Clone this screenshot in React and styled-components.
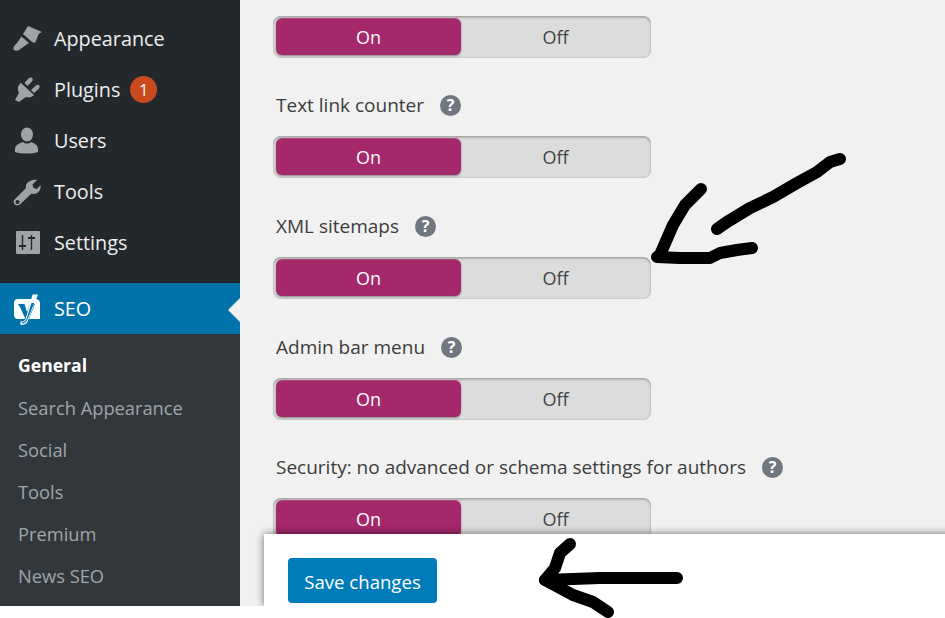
import React from "react";
import styled, { createGlobalStyle } from "styled-components";

const Global = createGlobalStyle`
  html, body { margin: 0; padding: 0; background: #fff; }
  body { font-family: "Open Sans", "Noto Sans", sans-serif; }
  * { box-sizing: border-box; }
`;

const Page = styled.div`
  position: relative;
  width: 945px;
  height: 618px;
  overflow: hidden;
  background: #fff;
`;
const Frame = styled.div`
  position: relative;
  display: flex;
  height: 606px;
  overflow: hidden;
`;
const Sidebar = styled.nav`
  width: 240px;
  flex: none;
  display: flex;
  flex-direction: column;
  background: #23282d;
  padding-top: 13px;
`;
const MenuItem = styled.div`
  height: 51px;
  display: flex;
  align-items: center;
  padding-left: 12px;
  gap: 12px;
  color: #eee;
  font-size: 19.8px;
  position: relative;
  flex: none;
`;
const ActiveItem = styled(MenuItem)`
  background: #0073aa;
  color: #fff;
  margin-top: 15px;
  &::after {
    content: "";
    position: absolute;
    right: 0;
    top: 15px;
    border: 12px solid transparent;
    border-left: 0;
    border-right-color: #f1f1f1;
  }
`;
const IconSvg = styled.svg`
  width: 30px;
  height: 30px;
  flex: none;
  fill: #9ea3a8;
`;
const Badge = styled.span`
  width: 27px;
  height: 27px;
  border-radius: 50%;
  background: #ca4a1f;
  color: #fff;
  font-size: 16px;
  display: flex;
  align-items: center;
  justify-content: center;
  margin-left: -2px;
`;
const SubMenu = styled.div`
  flex: 1;
  background: #32373c;
  padding-top: 10px;
`;
const SubItem = styled.div`
  height: 42px;
  display: flex;
  align-items: center;
  padding-left: 18px;
  font-size: ${p => (p.$active ? "17.6px" : "18.3px")};
  color: ${p => (p.$active ? "#fff" : "#a0a5aa")};
  font-weight: ${p => (p.$active ? 700 : 400)};
`;
const Main = styled.main`
  flex: 1;
  background: #f1f1f1;
  padding: 16px 0 0 33px;
  color: #444;
`;
const Setting = styled.div`
  display: flex;
  flex-direction: column;
  align-items: flex-start;
`;
const Label = styled.div`
  display: flex;
  align-items: center;
  height: 26px;
  margin: ${p => p.$top}px 0 18px 3px;
  font-size: 19px;
  font-weight: 400;
  color: #3c3c3c;
`;
const Help = styled.span`
  width: 21px;
  height: 21px;
  border-radius: 50%;
  background: #707780;
  color: #fff;
  font-size: 16px;
  font-weight: 700;
  display: flex;
  align-items: center;
  justify-content: center;
  margin-left: 16px;
`;
const Toggle = styled.div`
  width: 378px;
  height: 42px;
  flex: none;
  padding: 2px 3px 3px;
  border-radius: 8px;
  background: #dcdcdc;
  box-shadow: inset 0 2px 2px rgba(0,0,0,.18), inset 0 0 2px rgba(0,0,0,.25);
  display: grid;
  grid-template-columns: 185px 1fr;
  font-size: 18px;
`;
const OnPart = styled.div`
  background: #a4286a;
  color: #fff;
  border-radius: 6px;
  display: flex;
  align-items: center;
  justify-content: center;
  box-shadow: 0 1px 2px rgba(0,0,0,.4), inset 0 1px 1px rgba(255,255,255,.15);
`;
const OffPart = styled.div`
  color: #444;
  display: flex;
  align-items: center;
  justify-content: center;
  padding-left: 2px;
`;
const SaveBar = styled.div`
  position: absolute;
  left: 264px;
  top: 534px;
  right: -20px;
  height: 72px;
  background: #fff;
  box-shadow: 0 0 8px rgba(0,0,0,.55);
  padding: 24px;
`;
const SaveButton = styled.button`
  width: 149px;
  height: 45px;
  border: 0;
  padding: 2px 0 0;
  border-radius: 4px;
  background: #007cba;
  color: #fff;
  font: 400 18.6px "Open Sans", "Noto Sans", sans-serif;
`;
const Scribble = styled.svg`
  position: absolute;
  inset: 0;
  width: 945px;
  height: 618px;
  fill: none;
  stroke: #000;
  stroke-width: 12px;
  stroke-linecap: round;
  stroke-linejoin: round;
  pointer-events: none;
`;

const Brush = () => (
  <IconSvg viewBox="0 0 30 30">
    <path d="M16 2 L30 8 C27 9 26 11 26 12 L23 19 L20 18 L11 10 Z" />
    <path d="M9.5 12.5 L17 19 L9 24.5 C6 27.5 2 27 1.5 25 C1 23 3.5 20.5 5 19 Z" />
  </IconSvg>
);
const Plug = () => (
  <IconSvg viewBox="0 0 30 30">
    <path d="M9 8 L22 20 C20 22 17 23 14 22 L7 27 L3 25 L7 18 C5 14 6 10 9 8 Z" />
    <path d="M12.5 8 L17 3 C18 2 20 2.5 20.5 3.5 C21 5 20.5 6 19.5 7 L15.5 11 Z" />
    <path d="M19 15 L24 10.5 C25 9.5 26.5 9.5 27.2 10.5 C28 11.5 27.5 13 26.5 14 L22 18 Z" />
  </IconSvg>
);
const User = () => (
  <IconSvg viewBox="0 0 30 30">
    <ellipse cx="15" cy="8.5" rx="6" ry="7" />
    <path d="M3 23 C3 19 8 17 11 16 C13 18 17 18 19 16 C22 17 26 19 26 23 V26 C20 28 9 28 3 26 Z" />
  </IconSvg>
);
const Wrench = () => (
  <IconSvg viewBox="0 0 30 30">
    <path fillRule="evenodd" d="M21 3 C23 2.5 24 2.5 25 3 L20.5 7.5 L21.5 11 L25 12 L28.5 8 C29 10 28.5 13 26.5 15 C24.5 17 21.5 17.5 19.5 16.5 L8.5 27 C6.5 29 3 28.5 2 26.5 C1 24.5 2 23 3 22 L14 11 C13 7.5 16 4 21 3 Z M5.5 23 a2 2 0 1 0 .01 0 Z" />
  </IconSvg>
);
const Sliders = () => (
  <IconSvg viewBox="0 0 30 30">
    <path fillRule="evenodd" d="M5 3 H27 a1 1 0 0 1 1 1 V25 a1 1 0 0 1 -1 1 H5 a1 1 0 0 1 -1 -1 V4 a1 1 0 0 1 1 -1 Z M9.8 7 V17 H7 V19 H9.8 V22 H11.2 V19 H14 V17 H11.2 V7 Z M18.8 7 V9 H16 V11 H18.8 V22 H20.2 V11 H23 V9 H20.2 V7 Z" />
  </IconSvg>
);
const Yoast = () => (
  <IconSvg viewBox="0 0 30 30" style={{ overflow: "visible" }}>
    <path fill="#fff" d="M6 5 H23 C26 5 28 6.5 28 9 V25 H6 C3.5 25 2 23.5 2 21 V9 C2 6.5 3.5 5 6 5 Z" />
    <path fill="#0073aa" d="M6 10 H12.5 L15 18 L18 10 H23 L16.5 26 C15 29 13 30 9 30 L9 27 C11 27 12.5 26 13 24 L8 13 Z" />
    <path fill="#fff" d="M20.5 0.5 H26 L15.5 28 C14.5 30 12 31 8.5 31 V27.5 C11 27.5 12.8 27 13.6 25 Z" />
    <path fill="#0073aa" d="M19.5 9 H22.2 L15.5 25.5 C14.5 28 13 29.3 10 29.5 L10 28.2 C12.5 28 14 27 14.6 25 Z" />
  </IconSvg>
);

const Row = ({ label, top }) => (
  <Setting>
    {label && (
      <Label $top={top}>
        {label}
        <Help>?</Help>
      </Label>
    )}
    <Toggle>
      <OnPart>On</OnPart>
      <OffPart>Off</OffPart>
    </Toggle>
  </Setting>
);

export default function App() {
  return (
    <Page>
      <Global />
      <Frame>
        <Sidebar>
          <MenuItem><Brush />Appearance</MenuItem>
          <MenuItem><Plug />Plugins<Badge>1</Badge></MenuItem>
          <MenuItem><User />Users</MenuItem>
          <MenuItem><Wrench />Tools</MenuItem>
          <MenuItem><Sliders />Settings</MenuItem>
          <ActiveItem><Yoast />SEO</ActiveItem>
          <SubMenu>
            <SubItem $active>General</SubItem>
            <SubItem>Search Appearance</SubItem>
            <SubItem>Social</SubItem>
            <SubItem>Tools</SubItem>
            <SubItem>Premium</SubItem>
            <SubItem>News SEO</SubItem>
          </SubMenu>
        </Sidebar>
        <Main>
          <Row />
          <Row label="Text link counter" top={34} />
          <Row label="XML sitemaps" top={35} />
          <Row label="Admin bar menu" top={35} />
          <Row label="Security: no advanced or schema settings for authors" top={34} />
        </Main>
        <SaveBar>
          <SaveButton>Save changes</SaveButton>
        </SaveBar>
      </Frame>
      <Scribble viewBox="0 0 945 618">
        <path d="M840 159 L830 162 L817 172 L797 183 L773 197 L750 208 L727 222 L717 229" />
        <path d="M701 189 L685 205 L673 225 L660 255 L657 257 L680 258 L710 258 L720 253 L737 250 L752 248" />
        <path d="M570 544 L560 553 L555 568 L545 580 L600 578 L677 578" />
        <path d="M545 580 L573 595 L593 602 L608 612" />
      </Scribble>
    </Page>
  );
}
